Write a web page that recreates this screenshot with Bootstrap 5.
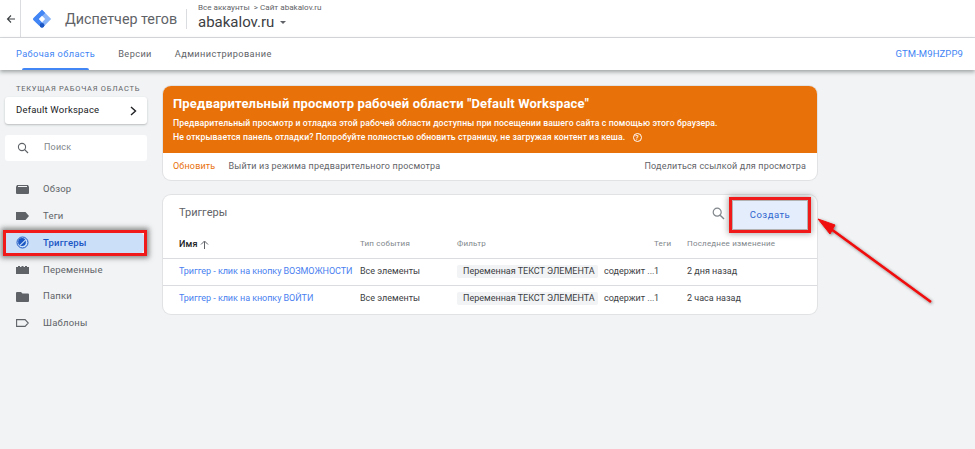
<!DOCTYPE html>
<html lang="ru">
<head>
    <meta charset="UTF-8">
    <meta name="viewport" content="width=device-width, initial-scale=1.0">
    <title>Диспетчер тегов</title>
    <link href="https://cdn.jsdelivr.net/npm/bootstrap@5.3.2/dist/css/bootstrap.min.css" rel="stylesheet">
    <style>
        body {
            background: #f1f3f4;
            font-family: Roboto, "Liberation Sans", sans-serif;
            font-size: 9px;
            letter-spacing: .2px;
            color: #3c4043;
            height: 449px;
            overflow: hidden;
            position: relative;
        }
        a { text-decoration: none; }
        .gtm-top { height: 38px; background: #fff; border-bottom: 1px solid #dadce0; }
        .gtm-back { width: 21px; height: 37px; border-right: 1px solid #dadce0; padding-left: 6px; }
        .gtm-logo { margin: 0 13px 0 11px; }
        .gtm-title { font-size: 14.3px; letter-spacing: 0; color: #5f6368; width: 122px; border-right: 1px solid #dadce0; line-height: 20px; margin-right: 11px; white-space: nowrap; }
        .gtm-where { margin-top: -5px; }
        .gtm-crumb { font-size: 8.1px; letter-spacing: 0; line-height: 9px; color: #5f6368; margin-top: 3px; }
        .gtm-site { font-size: 15px; letter-spacing: 0; line-height: 19px; color: #3c4043; margin-top: 1px; }
        .gtm-caret { display: inline-block; border: 3.5px solid transparent; border-top: 3.5px solid #5f6368; border-bottom: 0; margin-left: 2px; vertical-align: 3px; }
        .gtm-tabs { height: 32px; background: #fff; box-shadow: 0 2px 4px rgba(60,64,67,.45); padding: 0 12px 0 16px; position: relative; }
        .gtm-tab { color: #5f6368; font-size: 9.2px; letter-spacing: .4px; line-height: 32px; margin-right: 23px; position: relative; }
        .gtm-tab-on { color: #4285f4; }
        .gtm-tab-on::after { content: ""; position: absolute; left: 6px; right: 6px; bottom: 0; height: 2px; background: #4285f4; border-radius: 2px 2px 0 0; }
        .gtm-id { color: #4285f4; font-size: 9.5px; letter-spacing: .1px; }
        .gtm-side { width: 163px; flex: none; }
        .gtm-label { font-size: 7.5px; letter-spacing: .75px; color: #5f6368; margin: 14px 0 4px 16px; line-height: 9px; }
        .gtm-panel { margin-left: 5px; width: 142px; background: #fff; border-radius: 3px; box-shadow: 0 1px 2px rgba(60,64,67,.3); }
        .gtm-ws { height: 27px; padding: 0 10px 0 11px; font-size: 9.5px; color: #202124; }
        .gtm-find { height: 26px; margin-top: 11px; padding-left: 12px; color: #80868b; gap: 15px; box-shadow: none; }
        .gtm-nav { margin-top: 15px; }
        .gtm-item { height: 26.8px; padding-left: 16px; gap: 14px; color: #5f6368; font-size: 9.5px; width: 143px; margin-left: 3px; }
        .gtm-item svg { margin-left: -3px; }
        .gtm-item-on { color: #1a56c4; background: #cbdff8; border-radius: 0 14px 14px 0; position: relative; font-weight: 500; }
        .gtm-item-on::after { content: ""; position: absolute; inset: 0 -1px 0 0; border: 3px solid #f01a1a; box-shadow: 0 0 5px 2px rgba(50,50,50,.55); }
        .gtm-main { width: 654px; padding-top: 16px; }
        .gtm-card { background: #fff; border-radius: 8px; box-shadow: 0 0 0 1px #e0e2e4; overflow: hidden; }
        .gtm-note { background: #e8710a; color: #fff; height: 67px; padding: 10px; }
        .gtm-note-title { font-size: 13px; font-weight: 700; letter-spacing: .17px; line-height: 15px; margin-bottom: 5px; }
        .gtm-note-text { font-size: 8.7px; letter-spacing: .1px; line-height: 14px; font-weight: 500; }
        .gtm-help { display: inline-block; width: 9px; height: 9px; border: 1px solid #fff; border-radius: 50%; font-size: 7px; line-height: 8px; text-align: center; margin-left: 5px; letter-spacing: 0; }
        .gtm-note-foot { height: 27px; padding: 0 11px 0 10px; font-size: 9px; letter-spacing: .18px; color: #5f6368; }
        .gtm-refresh { color: #e8710a; margin-right: 13px; }
        .gtm-list { margin-top: 15px; height: 119px; overflow: visible; }
        .gtm-list-head { height: 36px; padding: 0 10px 0 16px; }
        .gtm-list-title { font-size: 11px; letter-spacing: 0; color: #5f6368; }
        .gtm-create { width: 74px; height: 28px; margin: 4px 0 0 8px; background: #e3edfb; color: #2f66d0; font-size: 9.5px; letter-spacing: .5px; border: 0; border-radius: 0; padding: 0; outline: 3px solid #f01a1a; outline-offset: 1px; box-shadow: 0 0 6px 5px rgba(50,50,50,.4); }
        .gtm-table { table-layout: fixed; margin: 0; width: 654px; --bs-table-bg: transparent; }
        .gtm-table th, .gtm-table td { padding: 0; vertical-align: middle; border-color: #dadce0; white-space: nowrap; box-shadow: none; }
        .gtm-table th { height: 27px; font-size: 8px; font-weight: 400; color: #80868b; letter-spacing: .2px; }
        .gtm-table td { height: 27px; font-size: 9px; letter-spacing: 0; color: #3c4043; }
        .gtm-table tr:last-child td { border-bottom: 0; }
        .gtm-table th:first-child, .gtm-table td:first-child { padding-left: 16px; }
        .gtm-table a { color: #4a7ff0; letter-spacing: -.05px; }
        .gtm-table th.gtm-sorted { color: #202124; font-weight: 500; font-size: 9px; }
        .gtm-chip { display: inline-block; width: 141px; height: 13px; line-height: 13px; background: #f1f3f4; padding-left: 6px; margin-right: 6px; border-radius: 2px; }
        .gtm-arrow { position: absolute; left: 815px; top: 215px; }
    </style>
</head>
<body>
    <div class="gtm-top d-flex align-items-center">
        <div class="gtm-back d-flex align-items-center">
            <svg width="10" height="10" viewBox="0 0 10 10"><path d="M9 5H2M5 1.500 1.500 5 5 8.500" fill="none" stroke="#3c4043" stroke-width="1.100"/></svg>
        </div>
        <svg class="gtm-logo" width="20" height="20" viewBox="0 0 20 20">
            <path d="M10 .8 19.200 10 10 19.200.8 10Z" fill="#8ab4f8"/>
            <path d="M10 .8 13.200 4 7 10.200 10.200 13.400 7 16.500 1.500 11.200Q.5 10 1.500 8.900Z" fill="#4285f4"/>
            <path d="M10 6.800 13.200 10 10 13.200 6.800 10Z" fill="#fff"/>
            <circle cx="10" cy="16.300" r="2.400" fill="#1a56c4"/>
        </svg>
        <div class="gtm-title">Диспетчер тегов</div>
        <div class="gtm-where">
            <div class="gtm-crumb">Все аккаунты &nbsp;&gt; Сайт abakalov.ru</div>
            <div class="gtm-site">abakalov.ru <span class="gtm-caret"></span></div>
        </div>
    </div>

    <div class="gtm-tabs d-flex align-items-center">
        <a class="gtm-tab gtm-tab-on" href="#">Рабочая область</a>
        <a class="gtm-tab" href="#">Версии</a>
        <a class="gtm-tab" href="#">Администрирование</a>
        <a class="gtm-id ms-auto" href="#">GTM-M9HZPP9</a>
    </div>

    <div class="d-flex">
        <div class="gtm-side">
            <div class="gtm-label">ТЕКУЩАЯ РАБОЧАЯ ОБЛАСТЬ</div>
            <div class="gtm-panel gtm-ws d-flex align-items-center justify-content-between">
                <span>Default Workspace</span>
                <svg width="7" height="10" viewBox="0 0 7 10"><path d="M1 1 5.500 5 1 9" fill="none" stroke="#202124" stroke-width="1.400"/></svg>
            </div>
            <div class="gtm-panel gtm-find d-flex align-items-center">
                <svg width="12" height="12" viewBox="0 0 12 12"><circle cx="5" cy="5" r="3.600" fill="none" stroke="#5f6368" stroke-width="1.100"/><path d="M7.700 7.700 11 11" stroke="#5f6368" stroke-width="1.200"/></svg>
                <span>Поиск</span>
            </div>
            <div class="gtm-nav">
                <div class="gtm-item d-flex align-items-center">
                    <svg width="13" height="9" viewBox="0 0 13 9"><path d="M1 0h11l1 2v6a1 1 0 0 1-1 1H1a1 1 0 0 1-1-1V2Z" fill="#5f6368"/><path d="M2 1h9v1H2Z" fill="#f1f3f4"/></svg>
                    <span>Обзор</span>
                </div>
                <div class="gtm-item d-flex align-items-center">
                    <svg width="13" height="8" viewBox="0 0 13 8"><path d="M0 0h9.500L13 4 9.500 8H0Z" fill="#5f6368"/></svg>
                    <span>Теги</span>
                </div>
                <div class="gtm-item gtm-item-on d-flex align-items-center">
                    <svg width="13" height="13" viewBox="0 0 13 13"><circle cx="6.500" cy="6.500" r="5.500" fill="none" stroke="#1a56c4"/><circle cx="6" cy="6" r="3.900" fill="#1a56c4"/><path d="M3.500 9 9.500 3.200 10.300 4 4.300 9.800Z" fill="#cbdff8"/></svg>
                    <span>Триггеры</span>
                </div>
                <div class="gtm-item d-flex align-items-center">
                    <svg width="13" height="8" viewBox="0 0 13 8"><path d="M0 1h2V0h2v1h1.500V0h2v1H9V0h2v1h2v7H0Z" fill="#5f6368"/></svg>
                    <span>Переменные</span>
                </div>
                <div class="gtm-item d-flex align-items-center">
                    <svg width="13" height="10" viewBox="0 0 13 10"><path d="M1 0h4l1.500 1.500H12a1 1 0 0 1 1 1V9a1 1 0 0 1-1 1H1a1 1 0 0 1-1-1V1a1 1 0 0 1 1-1Z" fill="#5f6368"/></svg>
                    <span>Папки</span>
                </div>
                <div class="gtm-item d-flex align-items-center">
                    <svg width="13" height="8" viewBox="0 0 13 8"><path d="M.6.600h8.500L12.300 4 9.100 7.400H.6Z" fill="none" stroke="#5f6368" stroke-width="1.100"/></svg>
                    <span>Шаблоны</span>
                </div>
            </div>
        </div>

        <div class="gtm-main">
            <div class="gtm-card">
                <div class="gtm-note">
                    <div class="gtm-note-title">Предварительный просмотр рабочей области "Default Workspace"</div>
                    <div class="gtm-note-text">Предварительный просмотр и отладка этой рабочей области доступны при посещении вашего сайта с помощью этого браузера.</div>
                    <div class="gtm-note-text">Не открывается панель отладки? Попробуйте полностью обновить страницу, не загружая контент из кеша. <span class="gtm-help">?</span></div>
                </div>
                <div class="gtm-note-foot d-flex align-items-center">
                    <span class="gtm-refresh">Обновить</span>
                    <span>Выйти из режима предварительного просмотра</span>
                    <span class="ms-auto">Поделиться ссылкой для просмотра</span>
                </div>
            </div>

            <div class="gtm-card gtm-list">
                <div class="gtm-list-head d-flex align-items-center">
                    <span class="gtm-list-title me-auto">Триггеры</span>
                    <svg width="13" height="13" viewBox="0 0 13 13"><circle cx="5.200" cy="5.200" r="4" fill="none" stroke="#80868b" stroke-width="1.200"/><path d="M8.200 8.200 12 12" stroke="#80868b" stroke-width="1.400"/></svg>
                    <button class="btn gtm-create">Создать</button>
                </div>
                <table class="table gtm-table">
                    <colgroup>
                        <col style="width:197px"><col style="width:97px"><col style="width:197px"><col style="width:33px"><col>
                    </colgroup>
                    <thead>
                        <tr>
                            <th class="gtm-sorted">Имя <svg width="9" height="9" viewBox="0 0 9 9"><path d="M4.500 9V1.500M1 4.500 4.500 1 8 4.500" fill="none" stroke="#5f6368" stroke-width="1"/></svg></th>
                            <th>Тип события</th>
                            <th>Фильтр</th>
                            <th>Теги</th>
                            <th>Последнее изменение</th>
                        </tr>
                    </thead>
                    <tbody>
                        <tr>
                            <td><a href="#">Триггер - клик на кнопку ВОЗМОЖНОСТИ</a></td>
                            <td>Все элементы</td>
                            <td><span class="gtm-chip">Переменная ТЕКСТ ЭЛЕМЕНТА</span>содержит ...</td>
                            <td>1</td>
                            <td>2 дня назад</td>
                        </tr>
                        <tr>
                            <td><a href="#">Триггер - клик на кнопку ВОЙТИ</a></td>
                            <td>Все элементы</td>
                            <td><span class="gtm-chip">Переменная ТЕКСТ ЭЛЕМЕНТА</span>содержит ...</td>
                            <td>1</td>
                            <td>2 часа назад</td>
                        </tr>
                    </tbody>
                </table>
            </div>
        </div>
    </div>

    <svg class="gtm-arrow" width="125" height="95" viewBox="0 0 125 95">
        <defs><filter id="arrowShade" x="-20%" y="-20%" width="140%" height="140%"><feDropShadow dx="1" dy="1" stdDeviation="1.500" flood-color="#333" flood-opacity=".6"/></filter></defs>
        <g filter="url(#arrowShade)">
            <path d="M3 4 20 10 15 19Z" fill="#f00a0a" stroke="#f00a0a" stroke-width="1" stroke-linejoin="round"/>
            <path d="M16 14 116 87" stroke="#f00a0a" stroke-width="2.600" fill="none"/>
        </g>
    </svg>

    <script src="https://cdn.jsdelivr.net/npm/bootstrap@5.3.2/dist/js/bootstrap.bundle.min.js"></script>
</body>
</html>
